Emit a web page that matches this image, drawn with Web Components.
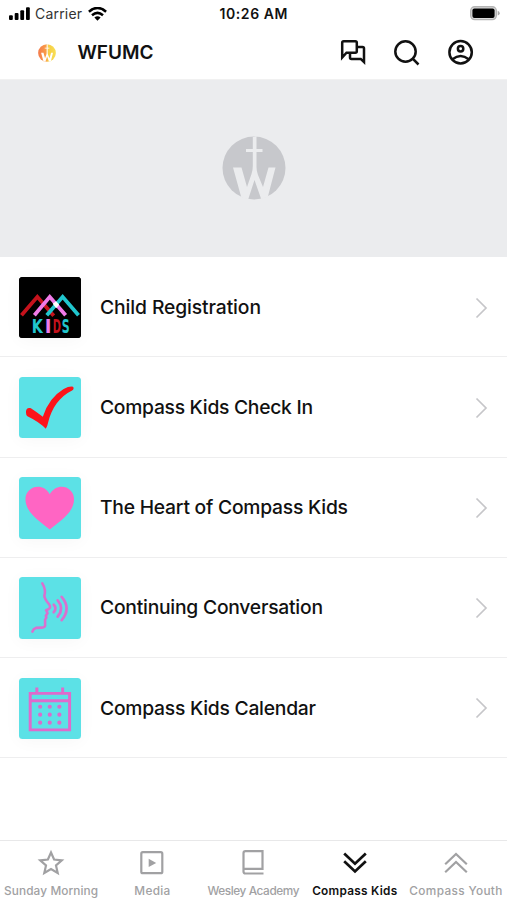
<!DOCTYPE html>
<html lang="en">
<head>
<meta charset="utf-8">
<title>WFUMC</title>
<style>
html,body{margin:0;background:#fff}
body{width:507px;height:900px;overflow:hidden;font-family:Inter,"Liberation Sans",sans-serif;color:#111}
</style>
</head>
<body>
<church-app></church-app>
<script>
// A single line of text tracked to a given measure.
class TrackedText extends HTMLElement {
  connectedCallback() {
    const root = this.attachShadow({mode:'open'});
    root.innerHTML = `<style>:host{display:inline-block;white-space:nowrap;width:${this.getAttribute('measure')}px}span{display:inline-block}</style><span></span>`;
    const s = root.querySelector('span');
    s.textContent = this.getAttribute('text');
    const n = s.textContent.length;
    s.style.letterSpacing = (this.getAttribute('measure') - s.getBoundingClientRect().width) / (n - 1) + 'px';
  }
}

class StatusBar extends HTMLElement {
  connectedCallback() {
    this.attachShadow({mode:'open'}).innerHTML = `
<style>
:host{display:grid;grid-template-columns:1fr auto 1fr;align-items:center;height:27px;padding:0 7px 0 9px;box-sizing:border-box;font-size:14px;line-height:20px}
.left{display:flex;align-items:center}
.carrier{margin:0 6px 0 5px;color:#333}
.time{font-weight:600;margin-left:-2px}
.battery{justify-self:end}
svg{display:block}
</style>
<div class="left">
<svg width="21" height="14" viewBox="0 0 21 14"><rect x="0" y="8.3" width="3.8" height="4.7" rx="1"/><rect x="5.7" y="6" width="3.8" height="7" rx="1"/><rect x="11.3" y="3.3" width="3.8" height="9.7" rx="1"/><rect x="17" y="0.3" width="3.8" height="12.7" rx="1"/></svg>
<tracked-text class="carrier" text="Carrier" measure="47"></tracked-text>
<svg width="19" height="14" viewBox="0 0 19 14" fill="none" stroke="#000" stroke-width="2.5"><path d="M.9 4.7Q9.5-2.8 18.1 4.7M4 8.3Q9.5 3.5 15 8.3"/><path d="M6.4 10.5Q9.5 8 12.6 10.5L9.5 13.7Z" fill="#000" stroke="none"/></svg>
</div>
<tracked-text class="time" text="10:26 AM" measure="68"></tracked-text>
<svg class="battery" width="30" height="15" viewBox="0 0 30 15"><rect x=".7" y=".7" width="25.6" height="12.9" rx="4" fill="#ddd" stroke="#b4b4b4" stroke-width="1.4"/><rect x="2.4" y="2.4" width="22.2" height="9.5" rx="2"/><path d="M27.7 4.8q2 .8 2 2.4t-2 2.4z" fill="#aaa"/></svg>`;
  }
}

class BrandMark extends HTMLElement {
  connectedCallback() {
    const warm = this.hasAttribute('warm'), s = this.getAttribute('size');
    this.attachShadow({mode:'open'}).innerHTML = `
<style>:host{display:block}svg{display:block}</style>
<svg width="${s}" height="${s}" viewBox="0 0 64 64">
<defs><linearGradient id="g" x1="0" x2="1"><stop offset="0" stop-color="#f47b4c"/><stop offset=".42" stop-color="#f99a48"/><stop offset=".58" stop-color="#f6cc45"/><stop offset="1" stop-color="#f7df55"/></linearGradient><clipPath id="c"><circle cx="32" cy="32" r="32"/></clipPath></defs>
<circle cx="32" cy="32" r="31.5" fill="${warm ? 'url(#g)' : '#c7c8cc'}"/>
<g clip-path="url(#c)" fill="${warm ? '#fff' : '#ebecee'}">
<path d="M30.8 1L34.5 0V13H40.5V16H34.5V31Q34.5 35 36 39L41 51L46.5 31.5H53.5L45 64H39.5L32.5 44L26 64H20L11 31.5H19.5L25 51L29.5 38Q30.8 34 30.8 30V16H24V13H30.8Z"/></g></svg>`;
  }
}

class AppHeader extends HTMLElement {
  connectedCallback() {
    this.attachShadow({mode:'open'}).innerHTML = `
<style>
:host{display:flex;align-items:center;height:53px;box-sizing:border-box;padding:0 31px 1px 38px;border-bottom:1px solid #f1f1f1}
.name{margin-left:21.5px;font-size:19px;font-weight:600;line-height:24px}
nav{margin-left:auto;display:flex;gap:24px}
svg{display:block;fill:none;stroke:#111;stroke-width:2.5}
</style>
<brand-mark warm size="18"></brand-mark>
<tracked-text class="name" text="WFUMC" measure="76"></tracked-text>
<nav>
<svg width="30" height="30" viewBox="0 0 30 30"><path d="M4.2 19.5V4.7Q4.2 3.2 5.7 3.2H17.3Q18.8 3.2 18.8 4.7V13.2Q18.8 14.7 17.3 14.7H8.5ZM19 9H24.5Q26 9 26 10.5V24L22.7 20.9H13.5Q12 20.900 12 19.4V15.5"/></svg>
<svg width="30" height="30" viewBox="0 0 30 30"><circle cx="13.5" cy="13.500" r="10.2"/><path d="M20.7 20.7L26.5 26.5"/></svg>
<svg width="30" height="30" viewBox="0 0 30 30"><circle cx="14.6" cy="14.200" r="11.2"/><circle cx="14.6" cy="10.700" r="2.7"/><path d="M6.5 21.200Q14.6 14.700 22.7 21.200"/></svg>
</nav>`;
  }
}

const kidsLetters = [['K',12.8,11.2,'#20c6ce'],['I',26,6.8,'#f07be9'],['D',34,8.2,'#c5121c'],['S',43,8,'#20c6ce']]
  .map(([c,x,w,f]) => `<text x="${x}" y="56.500" fill="${f}" textLength="${w}" lengthAdjust="spacingAndGlyphs">${c}</text>`).join('');

const art = {
  kids:`<rect x="-1" y="-1" width="65" height="65" fill="#000"/><g fill="none" stroke-width="3.8"><path d="M2.5 38.5L18.5 20L35 39" stroke="#c5121c"/><path d="M15.5 38.5L31 20L47 38.5" stroke="#f07be9"/><path d="M28 38.5L44 20L60 38.5" stroke="#20c6ce"/></g><path d="M34 27l3.5-2.5 3 3.5-3 3.5z" fill="#fff"/><g font-family="DejaVu Sans Condensed,DejaVu Sans,sans-serif" font-weight="700" font-size="19.5">${kidsLetters}</g>`,
  check:`<path d="M7 35.5C7 32 9 30.5 12 31.5Q18 35.5 24 40Q30 21 45 12Q51 9 54.5 9.8Q56 12 53.5 13.7C41 20 33 31 29.3 46Q28.5 50 27 52.2Q21 45.5 8.5 39.5Q7 38.5 7 35.5Z" fill="#fc141b"/>`,
  heart:`<path d="M31 53C23 46 6.5 36.5 6.5 22.5C6.5 9 24.5 4.5 31 17.5C38 4.5 55.5 9 55.5 22.5C55.5 36.5 39 46 31 53Z" fill="#ff65c3"/>`,
  talk:`<g fill="none" stroke="#da70cf" stroke-linecap="round" stroke-linejoin="round"><path stroke-width="2.6" d="M23.5 6.5Q27.5 13 25.5 19Q26 22.5 30 27Q33 31 29.5 32.5L27.3 33.5L28.8 36.5L27 39L27.6 41L26.3 43V47Q27 51 23 51L17 51.3Q14.5 52 13.5 55"/><path stroke-width="2.7" d="M35 28Q38.5 31.5 35 35.5M39 23.5Q46 31.5 39 40M43 20Q53 31.5 43 43.5"/></g>`,
  calendar:`<g fill="none" stroke="#df6acc" stroke-width="3"><path d="M11.3 15.500H51V52.300H11.3ZM11.3 23H51"/><path d="M18 9.500V15M44 9.500V15"/></g><g fill="#df6acc">${[29,37,45].map(y=>[21.3,31,40.7].map(x=>`<circle cx="${x}" cy="${y}" r="2.1"/>`).join('')).join('')}</g>`
};

class MenuRow extends HTMLElement {
  connectedCallback() {
    this.attachShadow({mode:'open'}).innerHTML = `
<style>
:host{display:flex;align-items:center;height:100.2px;box-sizing:border-box;padding:1.5px 19px 0;border-bottom:1.5px solid #eeeeef;font-size:19.3px;font-weight:500;line-height:26px}
.thumb{width:61.5px;height:61.5px;border-radius:3.5px;overflow:hidden;background:#5ce1e6;box-shadow:0 2px 18px #00000009}
:host([art=kids]) .thumb{background:#000}
.thumb svg,.chev{display:block}
tracked-text{margin:0 0 1.4px 19.5px}
.chev{margin-left:auto}
</style>
<div class="thumb"><svg width="61.5" height="61.5" viewBox="0 0 62 62">${art[this.getAttribute('art')]}</svg></div>
<tracked-text text="${this.getAttribute('label')}" measure="${this.getAttribute('measure')}"></tracked-text>
<svg class="chev" width="13" height="22" viewBox="0 0 13 22" fill="none" stroke="#c6c6c9" stroke-width="1.7"><path d="M1.5 1.5L11 11L1.5 20.5"/></svg>`;
  }
}

const glyphs = {
  star:'<path d="M15 4.500L18.100 11.500L25.800 12.300L20 17.400L21.700 25L15 21L8.300 25L10 17.400L4.200 12.300L11.900 11.500Z"/>',
  play:'<rect x="4.3" y="4.2" width="21" height="21" rx="1.5"/><path d="M11.7 10.7V19L19.2 14.9Z" fill="currentColor" stroke="none"/>',
  book:'<path d="M25.5 25.5H7.5Q5.5 25.5 5.5 23.5V5.2Q5.5 3.2 7.5 3.2H24.5V20.8H6"/>',
  down:'<path stroke-width="2.7" d="M4.2 5.5L15 15.7L25.8 5.5M4.2 13.2L15 23.5L25.8 13.2"/>',
  up:'<path d="M4.2 16.2L15 6L25.8 16.2M4.2 24.2L15 14L25.8 24.2"/>'
};

class TabItem extends HTMLElement {
  connectedCallback() {
    this.attachShadow({mode:'open'}).innerHTML = `
<style>
:host{display:flex;flex-direction:column;align-items:center;color:#a1a1a3;font-size:11.8px;font-weight:500;line-height:16px;min-width:0}
:host([active]){color:#111;font-weight:600}
svg{display:block;fill:none;stroke:currentColor;stroke-width:2.2;margin-bottom:4.5px}
</style>
<svg width="30" height="30" viewBox="0 0 30 30">${glyphs[this.getAttribute('icon')]}</svg>
<tracked-text text="${this.getAttribute('label')}" measure="${this.getAttribute('measure')}"></tracked-text>`;
  }
}

class ChurchApp extends HTMLElement {
  connectedCallback() {
    this.attachShadow({mode:'open'}).innerHTML = `
<style>
:host{display:flex;flex-direction:column;width:507px;height:900px;background:#fff}
.banner{display:flex;align-items:center;justify-content:center;height:177.2px;box-sizing:border-box;padding-bottom:2px;background:#ebecee;flex:none}
main{flex:1}
footer{display:grid;grid-template-columns:repeat(5,101.2px);height:60.5px;box-sizing:border-box;border-top:1.5px solid #e8e8e9;padding:7.5px 0 0 .5px}
</style>
<status-bar></status-bar>
<app-header></app-header>
<div class="banner"><brand-mark size="64"></brand-mark></div>
<main>
<menu-row art="kids" label="Child Registration" measure="161"></menu-row>
<menu-row art="check" label="Compass Kids Check In" measure="213"></menu-row>
<menu-row art="heart" label="The Heart of Compass Kids" measure="248"></menu-row>
<menu-row art="talk" label="Continuing Conversation" measure="223"></menu-row>
<menu-row art="calendar" label="Compass Kids Calendar" measure="216"></menu-row>
</main>
<footer>
<tab-item icon="star" label="Sunday Morning" measure="94"></tab-item>
<tab-item icon="play" label="Media" measure="36"></tab-item>
<tab-item icon="book" label="Wesley Academy" measure="92"></tab-item>
<tab-item icon="down" label="Compass Kids" measure="85" active></tab-item>
<tab-item icon="up" label="Compass Youth" measure="93"></tab-item>
</footer>`;
  }
}
customElements.define('tracked-text', TrackedText);
customElements.define('status-bar', StatusBar);
customElements.define('brand-mark', BrandMark);
customElements.define('app-header', AppHeader);
customElements.define('menu-row', MenuRow);
customElements.define('tab-item', TabItem);
customElements.define('church-app', ChurchApp);
</script>
</body>
</html>
